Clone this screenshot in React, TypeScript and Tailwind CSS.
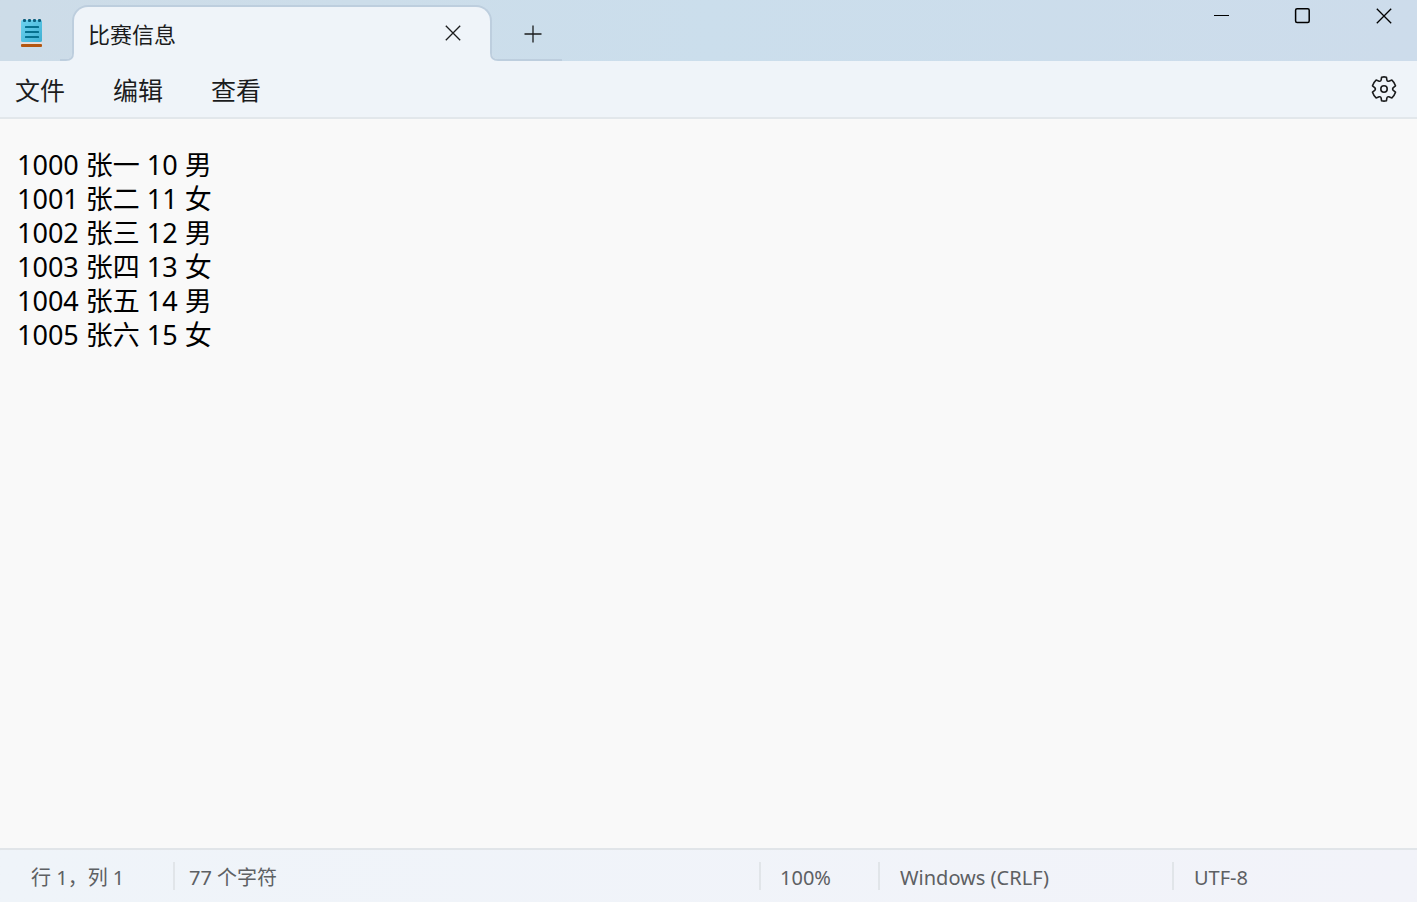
import { useState } from "react";

const fileText = [
  "1000 张一 10 男",
  "1001 张二 11 女",
  "1002 张三 12 男",
  "1003 张四 13 女",
  "1004 张五 14 男",
  "1005 张六 15 女",
].join("\n");

function NotepadIcon() {
  return (
    <svg width="22" height="30" viewBox="0 0 22 30" aria-hidden="true">
      <defs>
        <linearGradient id="page" x1="0" y1="0" x2="1" y2="1">
          <stop offset="0" stopColor="#6cd2ef" />
          <stop offset="1" stopColor="#3fb0d3" />
        </linearGradient>
      </defs>
      <rect x="0" y="21" width="21" height="5" rx="1" fill="#e3dedb" />
      <rect x="0" y="26" width="21" height="3" rx="1" fill="#b4560f" />
      <rect x="0" y="2" width="21" height="22" rx="1.5" fill="url(#page)" />
      <g fill="#0b5f7e">
        <rect x="2" y="1" width="3" height="3" rx="1" />
        <rect x="7" y="1" width="3" height="3" rx="1" />
        <rect x="12" y="1" width="3" height="3" rx="1" />
        <rect x="17" y="1" width="3" height="3" rx="1" />
      </g>
      <g fill="#05708f">
        <rect x="4" y="8" width="14" height="2" rx="0.5" />
        <rect x="4" y="13" width="14" height="2" rx="0.5" />
        <rect x="4" y="18" width="14" height="2" rx="0.5" />
      </g>
    </svg>
  );
}

function CloseIcon() {
  return (
    <svg width="16" height="16" viewBox="0 0 16 16" fill="none" stroke="currentColor" strokeWidth="1.3" aria-hidden="true">
      <path d="M0.8 0.8 15.2 15.2M15.2 0.8 0.8 15.2" />
    </svg>
  );
}

function GearIcon() {
  return (
    <svg width="26" height="26" viewBox="0 0 26 26" fill="none" stroke="currentColor" strokeWidth="1.6" strokeLinejoin="round" aria-hidden="true">
      <path d="M10.6 1.2Q13 0.6 15.4 1.2L15.9 4.1Q16.3 5.6 17.8 5.2L20.9 4.1Q23.2 6.1 24.5 9.8L22.3 11.6Q21 13 22.3 14.4L24.5 16.2Q23.2 19.9 20.9 21.9L17.8 20.8Q16.3 20.4 15.9 21.9L15.4 24.8Q13 25.4 10.6 24.8L10.1 21.9Q9.7 20.4 8.2 20.8L5.1 21.9Q2.8 19.9 1.5 16.2L3.7 14.4Q5 13 3.7 11.6L1.5 9.8Q2.8 6.1 5.1 4.1L8.2 5.2Q9.7 5.6 10.1 4.1Z" />
      <circle cx="13" cy="13" r="3.2" />
    </svg>
  );
}

function TitleBar() {
  return (
    <header className="flex h-[61px] shrink-0 items-end bg-linear-to-r from-[#cddce8] via-[#cbdeec] to-[#cddceb]">
      <div className="flex h-full w-[72px] shrink-0 items-center pt-1 pl-[21px]">
        <NotepadIcon />
      </div>
      <div className="relative flex h-[56px] w-[420px] items-center rounded-t-2xl border-2 border-b-0 border-[#bdcede] bg-[#eff4f9] pr-[29px] pl-[14px]">
        <svg className="absolute right-full bottom-0" width="14" height="12" viewBox="0 0 14 12" fill="none" aria-hidden="true">
          <path d="M0 10H6Q12 10 12 4V0H14V12H0Z" fill="#eff4f9" />
          <path d="M0 11H6Q13 11 13 4V0" stroke="#bdcede" strokeWidth="2" />
        </svg>
        <span className="flex-1 text-[22px]">比赛信息</span>
        <button type="button" aria-label="关闭标签页" className="mb-0.5 flex size-4 items-center justify-center">
          <CloseIcon />
        </button>
        <svg className="absolute bottom-0 left-full" width="72" height="12" viewBox="0 0 72 12" fill="none" aria-hidden="true">
          <path d="M10 10H8Q2 10 2 4V0H0V12H10Z" fill="#eff4f9" />
          <path d="M72 11H8Q1 11 1 4V0" stroke="#bdcede" strokeWidth="2" />
        </svg>
      </div>
      <button type="button" aria-label="新建标签页" className="flex h-[54px] w-[70px] items-center justify-center pl-3">
        <svg width="18" height="18" viewBox="0 0 18 18" fill="none" stroke="currentColor" strokeWidth="1.3" aria-hidden="true">
          <path d="M9 0.5V17.5M0.5 9H17.5" />
        </svg>
      </button>
      <div className="ml-auto flex self-start text-black">
        <button type="button" aria-label="最小化" className="flex h-8 w-[81px] items-center justify-center">
          <svg width="16" height="16" viewBox="0 0 16 16" aria-hidden="true">
            <rect x="1" y="7" width="15" height="1" fill="currentColor" />
          </svg>
        </button>
        <button type="button" aria-label="最大化" className="flex h-8 w-[81px] items-center justify-center">
          <svg width="16" height="16" viewBox="0 0 16 16" fill="none" stroke="currentColor" strokeWidth="1.5" aria-hidden="true">
            <rect x="1.6" y="0.8" width="13.6" height="13.6" rx="1.5" />
          </svg>
        </button>
        <button type="button" aria-label="关闭" className="flex h-8 w-[75px] items-center justify-center pl-2">
          <CloseIcon />
        </button>
      </div>
    </header>
  );
}

export default function App() {
  const [text, setText] = useState(fileText);

  return (
    <div className="flex h-screen flex-col bg-[#f9f9f9] font-['Noto_Sans','Noto_Sans_CJK_SC',sans-serif] text-[#1b1c1d]">
      <TitleBar />
      <nav className="flex h-[58px] shrink-0 items-center border-b-2 border-[#e2e7eb] bg-[#eff4f9] pr-5 pl-[15px] text-[25px]">
        <div className="flex gap-12 pt-1">
          <button type="button">文件</button>
          <button type="button">编辑</button>
          <button type="button">查看</button>
        </div>
        <button type="button" aria-label="设置" className="ml-auto">
          <GearIcon />
        </button>
      </nav>
      <textarea
        aria-label="文本编辑器"
        spellCheck={false}
        value={text}
        onChange={(event) => setText(event.target.value)}
        className="w-full flex-1 resize-none bg-[#f9f9f9] px-[17px] pt-[29px] text-[27px] leading-[34px] text-black outline-none"
      />
      <footer className="flex h-[54px] shrink-0 items-center border-t-2 border-[#e1e5e9] bg-linear-to-r from-[#eff4f9] to-[#f2f3f9] text-[20px] leading-6 text-[#5d6063]">
        <span className="w-[173px] pt-1 pl-[31px]">行 1，列 1</span>
        <span className="flex-1 border-l-2 border-[#e1e5e9] pt-1 pl-[14px]">77 个字符</span>
        <span className="w-[119px] border-l-2 border-[#e1e5e9] pt-1 pl-[19px]">100%</span>
        <span className="w-[294px] border-l-2 border-[#e1e5e9] pt-1 pl-[20px]">Windows (CRLF)</span>
        <span className="w-[245px] border-l-2 border-[#e1e5e9] pt-1 pl-[20px]">UTF-8</span>
      </footer>
    </div>
  );
}
